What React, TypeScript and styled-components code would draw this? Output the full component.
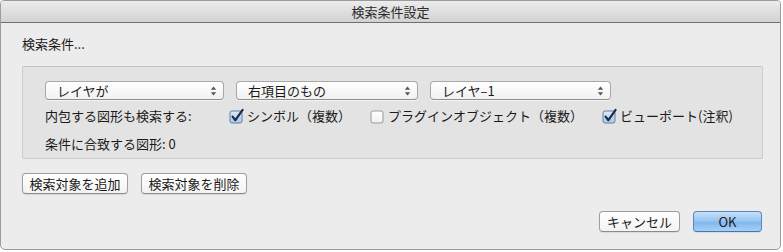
import React from "react";
import styled, { createGlobalStyle } from "styled-components";

const Global = createGlobalStyle`
  html, body { margin: 0; padding: 0; background: #ffffff; }
  body { font-family: "Noto Sans CJK JP", "Noto Sans", sans-serif; font-size: 13px; color: #1a1a1a; }
`;

const Window = styled.div`
  box-sizing: border-box;
  width: 781px;
  height: 250px;
  border: 1px solid #9c9c9c;
  border-radius: 4px 4px 5px 5px;
  background: #ececec;
  display: flex;
  flex-direction: column;
  overflow: hidden;
`;

const TitleBar = styled.div`
  height: 21px;
  flex: none;
  background: linear-gradient(#ececec, #d2d2d2);
  border-bottom: 1px solid #6f6f6f;
  display: flex;
  align-items: center;
  justify-content: center;
  font-size: 13px;
  color: #2a2a2a;
`;

const Body = styled.div`
  flex: 1;
  display: flex;
  flex-direction: column;
  padding: 13px 18px 0 21px;
`;

const Heading = styled.div`
  line-height: 16px;
  height: 16px;
  margin-bottom: 14px;
`;

const Panel = styled.div`
  box-sizing: border-box;
  width: 741px;
  height: 93px;
  background: #e3e3e3;
  border: 1px solid #cdcdcd;
  border-top-color: #c2c2c2;
  border-radius: 2px;
  padding: 14px 0 0 22px;
  display: flex;
  flex-direction: column;
`;

const SelectRow = styled.div`
  display: flex;
  gap: 12px;
`;

const Select = styled.div<{ $w: number }>`
  box-sizing: border-box;
  width: ${(p) => p.$w}px;
  height: 19px;
  border: 1px solid #a8a8a8;
  border-bottom-color: #8f8f8f;
  border-radius: 4px;
  background: linear-gradient(#ffffff, #f1f1f1);
  box-shadow: 0 1px 0 rgba(255, 255, 255, 0.6);
  display: flex;
  align-items: center;
  justify-content: space-between;
  padding: 0 6px 0 11px;
  font-size: 13px;
  line-height: 17px;
`;

const Arrows = () => (
  <svg width="7" height="10" viewBox="0 0 7 10">
    <path d="M3.5 0.5 L6.2 3.8 L0.8 3.8 Z" fill="#555" />
    <path d="M3.5 9.5 L6.2 6.2 L0.8 6.2 Z" fill="#555" />
  </svg>
);

const OptionRow = styled.div`
  display: flex;
  align-items: center;
  margin-top: 8px;
  height: 16px;
  line-height: 16px;
`;

const OptionLabel = styled.div`
  width: 184px;
  flex: none;
`;

const Check = styled.label<{ $w?: number }>`
  display: flex;
  align-items: center;
  gap: 3px;
  ${(p) => (p.$w ? `width: ${p.$w}px; flex: none;` : "")}
`;

const CheckBox = ({ checked }: { checked: boolean }) => (
  <svg width="15" height="15" viewBox="0 0 15 15" style={{ overflow: "visible" }}>
    <defs>
      <linearGradient id="cbOn" x1="0" y1="0" x2="0" y2="1">
        <stop offset="0" stopColor="#dbe9f8" />
        <stop offset="1" stopColor="#a9c9ec" />
      </linearGradient>
      <linearGradient id="cbOff" x1="0" y1="0" x2="0" y2="1">
        <stop offset="0" stopColor="#ffffff" />
        <stop offset="1" stopColor="#f0f0f0" />
      </linearGradient>
    </defs>
    <rect
      x="1"
      y="2"
      width="12"
      height="12"
      rx="2"
      fill={checked ? "url(#cbOn)" : "url(#cbOff)"}
      stroke={checked ? "#5f80a6" : "#9a9a9a"}
      strokeWidth="1"
    />
    {checked && (
      <path
        d="M3.6 7.6 L6.4 11.2 L13.6 0.8"
        fill="none"
        stroke="#1d2b48"
        strokeWidth="2.2"
        strokeLinecap="round"
        strokeLinejoin="round"
      />
    )}
  </svg>
);

const CountRow = styled.div`
  margin-top: 12px;
  height: 16px;
  line-height: 16px;
`;

const ButtonRow = styled.div`
  display: flex;
  gap: 13px;
  margin-top: 14px;
`;

const Button = styled.button<{ $w: number; $primary?: boolean }>`
  box-sizing: border-box;
  width: ${(p) => p.$w}px;
  height: 21px;
  padding: 0;
  font-family: inherit;
  font-size: 13px;
  line-height: 17px;
  color: #1a1a1a;
  border: 1px solid ${(p) => (p.$primary ? "#5d88bd" : "#9e9e9e")};
  border-bottom-color: ${(p) => (p.$primary ? "#4a76ad" : "#8a8a8a")};
  border-radius: 4px;
  background: ${(p) =>
    p.$primary
      ? "linear-gradient(#c9e1f9, #91c2f2 50%, #7db5ee 51%, #a6d0f7)"
      : "linear-gradient(#ffffff, #f3f3f3)"};
  box-shadow: 0 1px 1px rgba(0, 0, 0, 0.08);
`;

const Footer = styled.div`
  display: flex;
  justify-content: flex-end;
  gap: 13px;
  margin-top: 17px;
`;

export default function App() {
  return (
    <>
      <Global />
      <Window>
        <TitleBar>検索条件設定</TitleBar>
        <Body>
          <Heading>検索条件...</Heading>
          <Panel>
            <SelectRow>
              <Select $w={179}>
                <span>レイヤが</span>
                <Arrows />
              </Select>
              <Select $w={182}>
                <span>右項目のもの</span>
                <Arrows />
              </Select>
              <Select $w={181}>
                <span>レイヤ–1</span>
                <Arrows />
              </Select>
            </SelectRow>
            <OptionRow>
              <OptionLabel>内包する図形も検索する:</OptionLabel>
              <Check $w={141}>
                <CheckBox checked />
                シンボル（複数）
              </Check>
              <Check $w={232}>
                <CheckBox checked={false} />
                プラグインオブジェクト（複数）
              </Check>
              <Check>
                <CheckBox checked />
                ビューポート(注釈)
              </Check>
            </OptionRow>
            <CountRow>条件に合致する図形: 0</CountRow>
          </Panel>
          <ButtonRow>
            <Button $w={106}>検索対象を追加</Button>
            <Button $w={106}>検索対象を削除</Button>
          </ButtonRow>
          <Footer>
            <Button $w={81}>キャンセル</Button>
            <Button $w={69} $primary>
              OK
            </Button>
          </Footer>
        </Body>
      </Window>
    </>
  );
}
